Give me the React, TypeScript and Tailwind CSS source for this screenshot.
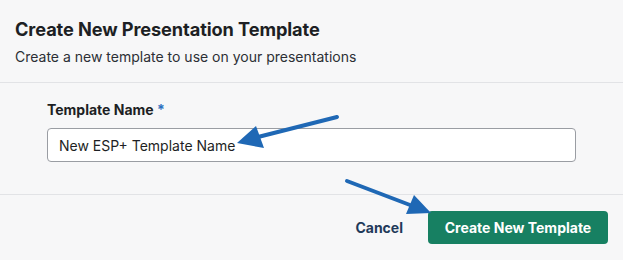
export default function App() {
  return (
    <div
      className="relative h-[260px] w-[623px] overflow-hidden bg-[#f7f7f8] text-[#1d1f24]"
      style={{ fontFamily: "Inter, 'Liberation Sans', sans-serif" }}
    >
      {/* Header */}
      <div className="border-b border-[#e2e3e6] px-[15px] pb-[15px] pt-[17px]">
        <h2 className="text-[18.2px] font-bold leading-6 tracking-[-0.1px]">Create New Presentation Template</h2>
        <p className="mt-[6px] text-[14px] leading-5 text-[#2c2f35]">
          Create a new template to use on your presentations
        </p>
      </div>

      {/* Body */}
      <div className="border-b border-[#e2e3e6] px-[47px] pb-[32px] pt-[17px]">
        <label className="block text-[14px] font-bold leading-5">
          Template Name <span className="text-[#2a6fc0]">*</span>
        </label>
        <input
          defaultValue="New ESP+ Template Name"
          className="mt-[8px] block h-[34px] w-[529px] rounded-[4px] border border-[#9a9da3] bg-white px-[11px] text-[14px] text-[#1d1f24] outline-none"
        />
      </div>

      {/* Footer */}
      <div className="flex items-center justify-end gap-[25px] px-[15px] pt-[16px]">
        <button className="text-[14px] font-bold text-[#1f3a5a]">Cancel</button>
        <button className="h-[33px] w-[180px] rounded-[4px] bg-[#178062] text-[14px] font-bold text-white">
          Create New Template
        </button>
      </div>

      {/* Annotation arrows */}
      <svg className="pointer-events-none absolute left-0 top-0" width="623" height="260">
        <line x1="337" y1="117" x2="258" y2="137" stroke="#1f68b5" strokeWidth="4" strokeLinecap="round" />
        <polygon points="237,143 256,126 264,148" fill="#1f68b5" />
        <line x1="347" y1="181" x2="410" y2="205" stroke="#1f68b5" strokeWidth="4" strokeLinecap="round" />
        <polygon points="431,213 406,214 414,195" fill="#1f68b5" />
      </svg>
    </div>
  );
}
